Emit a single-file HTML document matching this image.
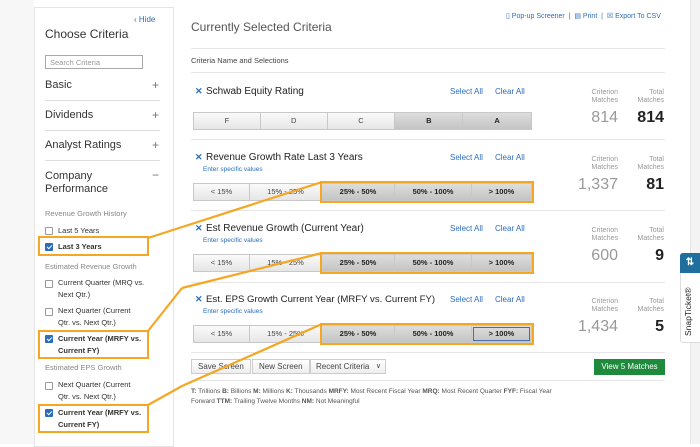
<!DOCTYPE html>
<html><head><meta charset="utf-8"><style>
*{margin:0;padding:0;box-sizing:border-box}
body{width:700px;height:444px;overflow:hidden;background:#fff;font-family:"Liberation Sans",Arial,sans-serif;color:#333;position:relative}
.a{position:absolute;white-space:nowrap}
.side{position:absolute;left:34px;top:7px;width:140px;height:440px;border:1px solid #e4e4e4;background:#fff}
.sec{position:absolute;left:45px;font-size:11px;color:#333}
.pl{position:absolute;left:152px;font-size:12px;color:#777}
.hl{position:absolute;left:45px;width:115px;height:1px;background:#ddd}
.gh{position:absolute;left:45px;font-size:7.5px;color:#888}
.cb{position:absolute;left:45px;width:8px;height:8px;border:1px solid #999;border-radius:1px;background:#fff}
.cb.on{background:#2a6ebb;border-color:#2a6ebb}
.cb.on:after{content:"";position:absolute;left:2px;top:0px;width:2px;height:4px;border:solid #fff;border-width:0 1px 1px 0;transform:rotate(45deg)}
.lb{position:absolute;left:58px;font-size:7.5px;color:#333;line-height:12px;white-space:normal;width:90px}
.lb b{font-weight:bold}
.ob{position:absolute;border:2px solid #f5a623}
.ln{position:absolute;left:191px;width:474px;height:1px;background:#e6e6e6}
.ttl{position:absolute;left:206px;font-size:10px;color:#222}
.x{position:absolute;left:195px;font-size:9px;color:#2a6ebb;font-weight:bold}
.lk{position:absolute;font-size:8px;color:#2a6ebb}
.es{position:absolute;left:203px;font-size:6.5px;color:#2a6ebb}
.bar{position:absolute;left:193px;height:18px;display:flex;border:1px solid #c8c8c8}
.bar div{height:100%;border-right:1px solid #c8c8c8;background:linear-gradient(#fafafa,#e6e6e6);font-size:7.5px;text-align:center;line-height:16px;color:#444}
.bar div.s{background:linear-gradient(#ddd,#c4c4c4);font-weight:bold;color:#222}
.cm{position:absolute;font-size:7px;color:#999;text-align:right;line-height:8px}
.n1{position:absolute;font-size:16px;color:#999;text-align:right;width:60px;font-weight:300}
.n2{position:absolute;font-size:16px;color:#222;font-weight:bold;text-align:right;width:40px}
.bt{position:absolute;top:359px;height:15px;border:1px solid #ccc;background:linear-gradient(#fff,#eee);font-size:8px;line-height:13px;color:#444;padding:0 6px}
</style></head><body>
<div style="position:absolute;left:0;top:0;width:34px;height:444px;background:#f7f7f7"></div>
<div style="position:absolute;left:690px;top:0;width:10px;height:444px;background:#f3f3f3;border-left:1px solid #e6e6e6"></div>
<div class="side"></div>
<div class="a" style="left:134px;top:15px;font-size:8px;color:#2a6ebb">&#x2039; Hide</div>
<div class="a" style="left:45px;top:27px;font-size:12px;color:#333">Choose Criteria</div>
<div class="a" style="left:45px;top:55px;width:98px;height:14px;border:1px solid #aaa;font-size:7.5px;color:#999;padding:2px 4px">Search Criteria</div>
<div class="sec" style="top:79px">Basic</div><div class="pl" style="top:78px">+</div><div class="hl" style="top:100px"></div>
<div class="sec" style="top:109px">Dividends</div><div class="pl" style="top:108px">+</div><div class="hl" style="top:130px"></div>
<div class="sec" style="top:139px">Analyst Ratings</div><div class="pl" style="top:138px">+</div><div class="hl" style="top:160px"></div>
<div class="sec" style="top:170px;line-height:13px">Company<br>Performance</div><div class="pl" style="top:168px">&minus;</div>
<div class="gh" style="top:209px">Revenue Growth History</div>
<div class="cb" style="top:227px"></div><div class="lb" style="top:225px">Last 5 Years</div>
<div class="cb on" style="top:243px"></div><div class="lb" style="top:241px"><b>Last 3 Years</b></div>
<div class="gh" style="top:262px">Estimated Revenue Growth</div>
<div class="cb" style="top:280px"></div><div class="lb" style="top:277px">Current Quarter (MRQ vs. Next Qtr.)</div>
<div class="cb" style="top:308px"></div><div class="lb" style="top:305px;width:86px">Next Quarter (Current Qtr. vs. Next Qtr.)</div>
<div class="cb on" style="top:335px"></div><div class="lb" style="top:333px;width:86px"><b>Current Year (MRFY vs. Current FY)</b></div>
<div class="gh" style="top:363px">Estimated EPS Growth</div>
<div class="cb" style="top:382px"></div><div class="lb" style="top:379px;width:86px">Next Quarter (Current Qtr. vs. Next Qtr.)</div>
<div class="cb on" style="top:409px"></div><div class="lb" style="top:407px;width:86px"><b>Current Year (MRFY vs. Current FY)</b></div>
<div class="ob" style="left:38px;top:236px;width:111px;height:20px"></div>
<div class="ob" style="left:38px;top:330px;width:111px;height:29px"></div>
<div class="ob" style="left:38px;top:404px;width:111px;height:29px"></div>

<div class="a" style="left:191px;top:20px;font-size:12px;color:#555">Currently Selected Criteria</div>
<div class="a" style="left:506px;top:12px;font-size:7px;color:#2a6ebb">&#9647; Pop-up Screener &nbsp;|&nbsp; &#9636; Print &nbsp;|&nbsp; &#9746; Export To CSV</div>
<div class="ln" style="top:48px"></div>
<div class="a" style="left:191px;top:56px;font-size:7.5px;color:#444">Criteria Name and Selections</div>
<div class="ln" style="top:72px"></div>

<div class="x" style="top:86px">&#x2715;</div><div class="ttl" style="top:86px">Schwab Equity Rating</div>
<div class="lk" style="left:450px;top:87px">Select All</div><div class="lk" style="left:495px;top:87px">Clear All</div>
<div class="bar" style="top:112px;width:339px"><div style="width:67px">F</div><div style="width:67px">D</div><div style="width:68px">C</div><div class="s" style="width:68px">B</div><div class="s" style="width:68px;border-right:0">A</div></div>
<div class="cm" style="left:578px;top:89px;width:40px">Criterion<br>Matches</div><div class="cm" style="left:624px;top:89px;width:40px">Total<br>Matches</div>
<div class="n1" style="left:558px;top:109px">814</div><div class="n2" style="left:624px;top:109px">814</div>
<div class="ln" style="top:139px"></div>

<div class="x" style="top:152px">&#x2715;</div><div class="ttl" style="top:152px">Revenue Growth Rate Last 3 Years</div>
<div class="lk" style="left:450px;top:153px">Select All</div><div class="lk" style="left:495px;top:153px">Clear All</div>
<div class="es" style="top:166px">Enter specific values</div>
<div class="bar" style="top:183px;width:339px"><div style="width:56px">&lt; 15%</div><div style="width:72px">15% - 25%</div><div class="s" style="width:73px">25% - 50%</div><div class="s" style="width:77px">50% - 100%</div><div class="s" style="width:59px;border-right:0">&gt; 100%</div></div>
<div class="cm" style="left:578px;top:156px;width:40px">Criterion<br>Matches</div><div class="cm" style="left:624px;top:156px;width:40px">Total<br>Matches</div>
<div class="n1" style="left:558px;top:176px">1,337</div><div class="n2" style="left:624px;top:176px">81</div>
<div class="ln" style="top:210px"></div>

<div class="x" style="top:223px">&#x2715;</div><div class="ttl" style="top:223px">Est Revenue Growth (Current Year)</div>
<div class="lk" style="left:450px;top:224px">Select All</div><div class="lk" style="left:495px;top:224px">Clear All</div>
<div class="es" style="top:237px">Enter specific values</div>
<div class="bar" style="top:254px;width:339px"><div style="width:56px">&lt; 15%</div><div style="width:72px">15% - 25%</div><div class="s" style="width:73px">25% - 50%</div><div class="s" style="width:77px">50% - 100%</div><div class="s" style="width:59px;border-right:0">&gt; 100%</div></div>
<div class="cm" style="left:578px;top:227px;width:40px">Criterion<br>Matches</div><div class="cm" style="left:624px;top:227px;width:40px">Total<br>Matches</div>
<div class="n1" style="left:558px;top:247px">600</div><div class="n2" style="left:624px;top:247px">9</div>
<div class="ln" style="top:282px"></div>

<div class="x" style="top:294px">&#x2715;</div><div class="ttl" style="top:294px;font-size:9.6px">Est. EPS Growth Current Year (MRFY vs. Current FY)</div>
<div class="lk" style="left:450px;top:295px">Select All</div><div class="lk" style="left:495px;top:295px">Clear All</div>
<div class="es" style="top:308px">Enter specific values</div>
<div class="bar" style="top:325px;width:339px"><div style="width:56px">&lt; 15%</div><div style="width:72px">15% - 25%</div><div class="s" style="width:73px">25% - 50%</div><div class="s" style="width:77px">50% - 100%</div><div class="s" style="width:59px;border-right:0;outline:1px solid #4a6fa5;outline-offset:-2px">&gt; 100%</div></div>
<div class="cm" style="left:578px;top:298px;width:40px">Criterion<br>Matches</div><div class="cm" style="left:624px;top:298px;width:40px">Total<br>Matches</div>
<div class="n1" style="left:558px;top:318px">1,434</div><div class="n2" style="left:624px;top:318px">5</div>
<div class="ln" style="top:352px"></div>

<div class="bt" style="left:191px">Save Screen</div>
<div class="bt" style="left:252px">New Screen</div>
<div class="bt" style="left:310px;width:76px;padding:0 5px">Recent Criteria <span style="position:absolute;right:4px;top:0;font-size:7px">&#8744;</span></div>
<div class="a" style="left:594px;top:359px;width:71px;height:16px;background:#1e8a3c;color:#fff;font-size:8px;text-align:center;line-height:16px">View 5 Matches</div>
<div class="ln" style="top:380px"></div>
<div class="a" style="left:191px;top:387px;font-size:6.5px;color:#555;line-height:10px">
<b>T:</b> Trillions <b>B:</b> Billions <b>M:</b> Millions <b>K:</b> Thousands <b>MRFY:</b> Most Recent Fiscal Year <b>MRQ:</b> Most Recent Quarter <b>FYF:</b> Fiscal Year<br>Forward <b>TTM:</b> Trailing Twelve Months <b>NM:</b> Not Meaningful</div>

<div class="ob" style="left:320px;top:181px;width:214px;height:22px"></div>
<div class="ob" style="left:320px;top:252px;width:214px;height:22px"></div>
<div class="ob" style="left:320px;top:323px;width:214px;height:22px"></div>
<svg width="700" height="444" style="position:absolute;left:0;top:0">
<g stroke="#f5a623" stroke-width="2.2">
<line x1="148" y1="238" x2="322" y2="182"/>
<line x1="148" y1="331" x2="182" y2="288"/><line x1="182" y1="288" x2="322" y2="253"/>
<line x1="148" y1="405" x2="182" y2="386"/><line x1="182" y1="386" x2="322" y2="324"/>
</g></svg>

<div class="a" style="left:680px;top:253px;width:20px;height:90px;background:#fff;border:1px solid #ddd;border-right:0;border-radius:3px 0 0 3px"></div>
<div class="a" style="left:680px;top:253px;width:20px;height:20px;background:#1e6e9e;border-radius:3px 0 0 0;color:#fff;font-size:10px;text-align:center;line-height:20px;font-weight:bold">&#8645;</div>
<div class="a" style="left:683px;top:336px;transform:rotate(-90deg);transform-origin:0 0;font-size:8.5px;color:#222">SnapTicket&reg;</div>
</body></html>
